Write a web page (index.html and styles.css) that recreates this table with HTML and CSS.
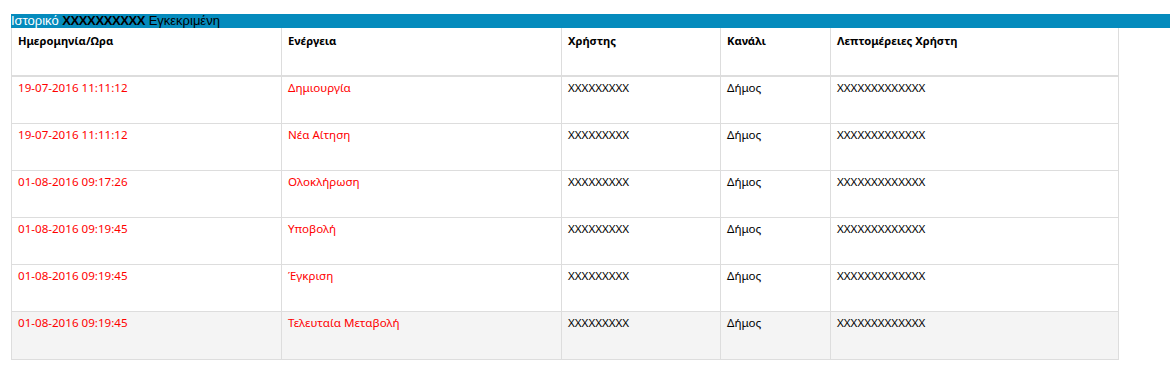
FILE: index.html
```html
<!DOCTYPE html>
<html lang="el">
<head>
<meta charset="utf-8">
<link rel="stylesheet" href="styles.css">
</head>
<body>
<div class="page">
  <div class="title-bar"><span class="title-lead">Ιστορικό</span> <b class="title-code">XXXXXXXXXX</b> Εγκεκριμένη</div>
  <table class="history">
    <colgroup>
      <col class="c1"><col class="c2"><col class="c3"><col class="c4"><col class="c5">
    </colgroup>
    <thead>
      <tr>
        <th>Ημερομηνία/Ωρα</th>
        <th>Ενέργεια</th>
        <th>Χρήστης</th>
        <th>Κανάλι</th>
        <th>Λεπτομέρειες Χρήστη</th>
      </tr>
    </thead>
    <tbody>
      <tr><td class="red">19-07-2016 11:11:12</td><td class="red">Δημιουργία</td><td>XXXXXXXXX</td><td>Δήμος</td><td>XXXXXXXXXXXXX</td></tr>
      <tr><td class="red">19-07-2016 11:11:12</td><td class="red">Νέα Αίτηση</td><td>XXXXXXXXX</td><td>Δήμος</td><td>XXXXXXXXXXXXX</td></tr>
      <tr><td class="red">01-08-2016 09:17:26</td><td class="red">Ολοκλήρωση</td><td>XXXXXXXXX</td><td>Δήμος</td><td>XXXXXXXXXXXXX</td></tr>
      <tr><td class="red">01-08-2016 09:19:45</td><td class="red">Υποβολή</td><td>XXXXXXXXX</td><td>Δήμος</td><td>XXXXXXXXXXXXX</td></tr>
      <tr><td class="red">01-08-2016 09:19:45</td><td class="red">Έγκριση</td><td>XXXXXXXXX</td><td>Δήμος</td><td>XXXXXXXXXXXXX</td></tr>
      <tr class="last"><td class="red">01-08-2016 09:19:45</td><td class="red">Τελευταία Μεταβολή</td><td>XXXXXXXXX</td><td>Δήμος</td><td>XXXXXXXXXXXXX</td></tr>
    </tbody>
  </table>
</div>
</body>
</html>
```
FILE: styles.css
```css
html, body {
  margin: 0;
  padding: 0;
  background: #fff;
}
.page {
  padding: 14px 0 0 11px;
  font-family: "Noto Sans", "Open Sans", sans-serif;
  color: #000;
}
.title-bar {
  background: #058bbd;
  height: 14px;
  line-height: 14px;
  font-size: 13px;
  font-family: "Liberation Sans", Arial, sans-serif;
  color: #000;
  white-space: nowrap;
  overflow: hidden;
}
.title-lead {
  color: #fff;
}
.title-code {
  letter-spacing: -0.4px;
}
.history {
  border-collapse: collapse;
  table-layout: fixed;
  width: 1107px;
  font-size: 11.6px;
  line-height: 16px;
}
.c1 { width: 270px; }
.c2 { width: 280px; }
.c3 { width: 159px; }
.c4 { width: 110px; }
.c5 { width: 288px; }
.history th,
.history td {
  border-left: 1px solid #ddd;
  border-right: 1px solid #ddd;
  text-align: left;
  vertical-align: top;
  padding: 0 6px;
}
.history th {
  font-weight: bold;
  font-size: 11.2px;
  height: 48px;
  padding-top: 5px;
  box-sizing: border-box;
  border-bottom: 2px solid #ddd;
}
.history td {
  height: 47px;
  padding-top: 3px;
  box-sizing: border-box;
  border-bottom: 1px solid #ddd;
}
.history tr.last td {
  height: 48px;
  background: #f4f4f4;
}
.history td.red {
  color: #f00;
}
```
